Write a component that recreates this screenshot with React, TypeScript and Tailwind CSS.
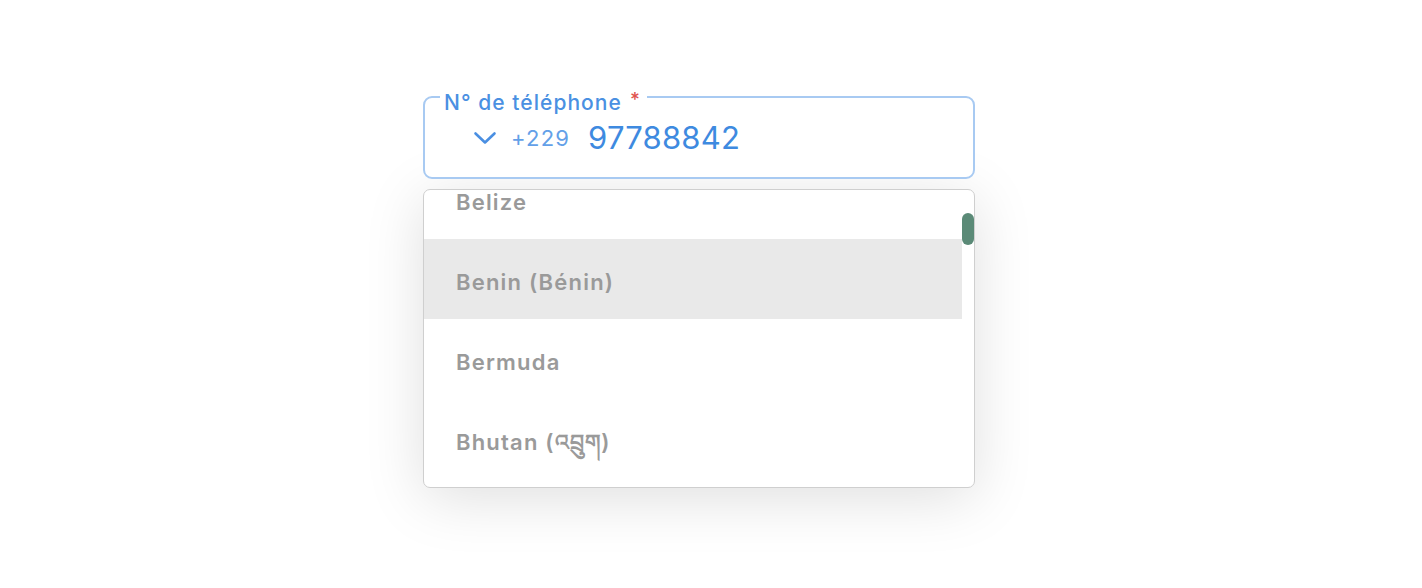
import React from 'react'

type Country = {
  name: string
  active?: boolean
}

const countries: Country[] = [
  { name: 'Belize' },
  { name: 'Benin (Bénin)', active: true },
  { name: 'Bermuda' },
  { name: 'Bhutan (འབྲུག)' },
]

const font = { fontFamily: 'Inter, "Noto Sans", "DejaVu Sans", sans-serif' }

const Chevron = () => (
  <svg width="24" height="14" viewBox="0 0 24 14" fill="none">
    <path
      d="M2.5 2.5 L12 11.5 L21.5 2.5"
      stroke="#4a8fe2"
      strokeWidth="2.6"
      strokeLinecap="round"
      strokeLinejoin="round"
    />
  </svg>
)

const App = () => {
  return (
    <div
      className="min-h-[588px] w-full bg-white pl-[423px] pt-[96px]"
      style={font}
    >
      <div className="w-[552px]">
        {/* phone field */}
        <div className="relative h-[83px] rounded-[9px] border-2 border-[#a8caf2] bg-white">
          <span className="absolute left-[15px] top-[-7px] flex items-start bg-white pl-[4px] pr-[6px] text-[21px] font-medium leading-[24px] tracking-[1.05px] text-[#4a90e2]">
            N° de téléphone
            <span className="ml-[8px] mt-[-1px] text-[19px] leading-[19px] text-[#e0534f]">*</span>
          </span>
          <div className="flex h-full items-center pl-[48px] pt-[1px]">
            <Chevron />
            <span className="ml-[14px] text-[22px] tracking-[1.2px] text-[#63a0e8]">+229</span>
            <span className="ml-[18px] text-[31px] tracking-[0.2px] text-[#3e8ae0]">97788842</span>
          </div>
        </div>

        {/* country dropdown */}
        <div className="mt-[10px] flex h-[299px] overflow-hidden rounded-[7px] border border-[#cfcfcf] bg-white shadow-[0_10px_60px_rgba(0,0,0,0.13)]">
          <ul className="mt-[-31px] flex-1">
            {countries.map((c) => (
              <li
                key={c.name}
                className={
                  'flex h-[80px] items-center pl-[32px] pt-[7px] text-[22px] font-semibold tracking-[1.2px] text-[#9a9a9a] ' +
                  (c.active ? 'bg-[#e9e9e9]' : '')
                }
              >
                {c.name}
              </li>
            ))}
          </ul>
          <div className="w-[12px] pt-[23px]">
            <div className="h-[32px] w-[12px] rounded-full bg-[#5b8a77]" />
          </div>
        </div>
      </div>
    </div>
  )
}

export default App
